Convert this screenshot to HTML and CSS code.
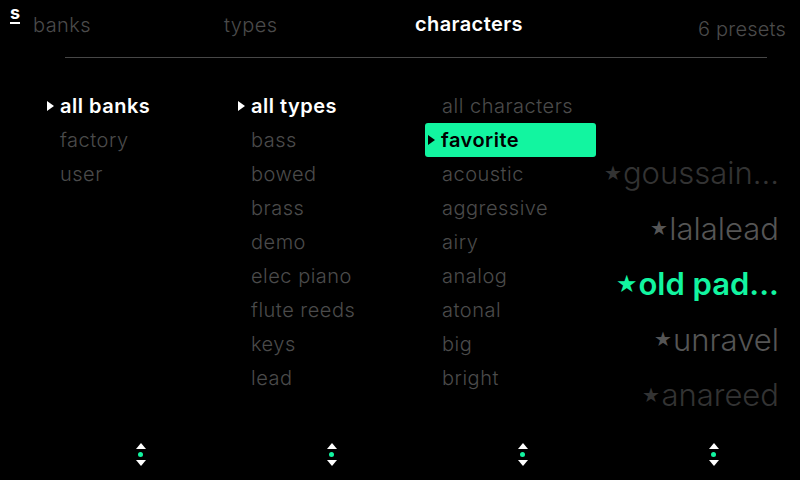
FILE: index.html
```html
<!DOCTYPE html>
<html>
<head>
<meta charset="utf-8">
<link rel="stylesheet" href="styles.css">
</head>
<body>
<div class="screen">
  <header class="header">
    <div class="logo"><span class="logo-s">s</span></div>
    <div class="tab">banks</div>
    <div class="tab">types</div>
    <div class="tab active">characters</div>
    <div class="count">6 presets</div>
  </header>
  <div class="rule"></div>
  <main class="main">
    <ul class="list">
      <li class="item current"><span class="arrow"></span>all banks</li>
      <li class="item">factory</li>
      <li class="item">user</li>
    </ul>
    <ul class="list">
      <li class="item current"><span class="arrow"></span>all types</li>
      <li class="item">bass</li>
      <li class="item">bowed</li>
      <li class="item">brass</li>
      <li class="item">demo</li>
      <li class="item">elec piano</li>
      <li class="item">flute reeds</li>
      <li class="item">keys</li>
      <li class="item">lead</li>
    </ul>
    <ul class="list">
      <li class="item">all characters</li>
      <li class="item selected"><span class="arrow"></span>favorite</li>
      <li class="item">acoustic</li>
      <li class="item">aggressive</li>
      <li class="item">airy</li>
      <li class="item">analog</li>
      <li class="item">atonal</li>
      <li class="item">big</li>
      <li class="item">bright</li>
    </ul>
    <ul class="presets">
      <li class="preset far"><span class="star">★</span>goussain...</li>
      <li class="preset"><span class="star">★</span>lalalead</li>
      <li class="preset chosen"><span class="star">★</span>old pad...</li>
      <li class="preset"><span class="star">★</span>unravel</li>
      <li class="preset far"><span class="star">★</span>anareed</li>
    </ul>
  </main>
  <footer class="footer">
    <div class="scroller"><span class="up"></span><span class="dot"></span><span class="down"></span></div>
    <div class="scroller"><span class="up"></span><span class="dot"></span><span class="down"></span></div>
    <div class="scroller"><span class="up"></span><span class="dot"></span><span class="down"></span></div>
    <div class="scroller"><span class="up"></span><span class="dot"></span><span class="down"></span></div>
  </footer>
</div>
</body>
</html>
```
FILE: styles.css
```css
* { box-sizing: border-box; }
html, body { margin: 0; padding: 0; background: #000; }
body {
  font-family: "Inter", "Open Sans", sans-serif;
  color: #4b4b4b;
}
.screen {
  width: 800px;
  height: 480px;
  display: flex;
  flex-direction: column;
  overflow: hidden;
}
.header {
  height: 57px;
  display: grid;
  grid-template-columns: 23px 191px 191px 1fr auto;
  padding: 0 14px 0 10px;
  align-items: start;
}
.logo { padding-top: 3px; }
.logo-s {
  display: inline-block;
  color: #fff;
  font-weight: 700;
  font-size: 18px;
  line-height: 16px;
  border-bottom: 2px solid #fff;
  padding-bottom: 1px;
}
.tab {
  font-size: 20px;
  font-weight: 300;
  letter-spacing: 0.4px;
  padding-top: 13px;
  line-height: 24px;
}
.tab.active { color: #fff; font-weight: 600; padding-top: 12px; }
.count {
  font-size: 20px;
  font-weight: 300;
  letter-spacing: 0.2px;
  padding-top: 17px;
  line-height: 24px;
}
.rule {
  height: 1px;
  background: #474747;
  margin: 0 33px 0 65px;
}
.main {
  flex: 1;
  display: grid;
  grid-template-columns: 191px 191px 174px 1fr;
  padding: 0 21px 0 44px;
}
.list, .presets { list-style: none; margin: 0; padding: 0; }
.list { padding-top: 31px; }
.item {
  height: 34px;
  display: flex;
  align-items: center;
  padding-left: 16px;
  font-size: 20px;
  font-weight: 300;
  letter-spacing: 0.5px;
  white-space: nowrap;
}
.item.current, .item.selected {
  padding-left: 3px;
  font-weight: 600;
}
.item.current { color: #fff; }
.item.selected {
  background: #12f5a0;
  color: #000;
  border-radius: 3px;
  margin-left: -1px;
  margin-right: 4px;
}
.arrow {
  width: 0;
  height: 0;
  border-top: 5px solid transparent;
  border-bottom: 5px solid transparent;
  border-left: 7px solid currentColor;
  margin-right: 6px;
}
.presets {
  padding-top: 87px;
  display: flex;
  flex-direction: column;
  align-items: flex-end;
}
.preset {
  height: 55.5px;
  display: flex;
  align-items: center;
  font-size: 31px;
  font-weight: 300;
  color: #555;
  white-space: nowrap;
}
.preset.far { color: #333; }
.preset.chosen { color: #12f5a0; font-weight: 600; }
.star {
  font-family: "DejaVu Sans", sans-serif;
  font-size: 20px;
  margin-right: 1px;
}
.chosen .star { font-size: 24px; }
.footer {
  height: 37px;
  display: grid;
  grid-template-columns: repeat(4, 191px);
  padding-left: 45px;
  padding-bottom: 6px;
}
.scroller {
  display: flex;
  flex-direction: column;
  align-items: center;
  gap: 3px;
}
.up, .down {
  width: 0;
  height: 0;
  border-left: 5.5px solid transparent;
  border-right: 5.5px solid transparent;
}
.up { border-bottom: 6px solid #fff; }
.down { border-top: 6px solid #fff; }
.dot {
  width: 5px;
  height: 5px;
  border-radius: 50%;
  background: #12f5a0;
}
```
